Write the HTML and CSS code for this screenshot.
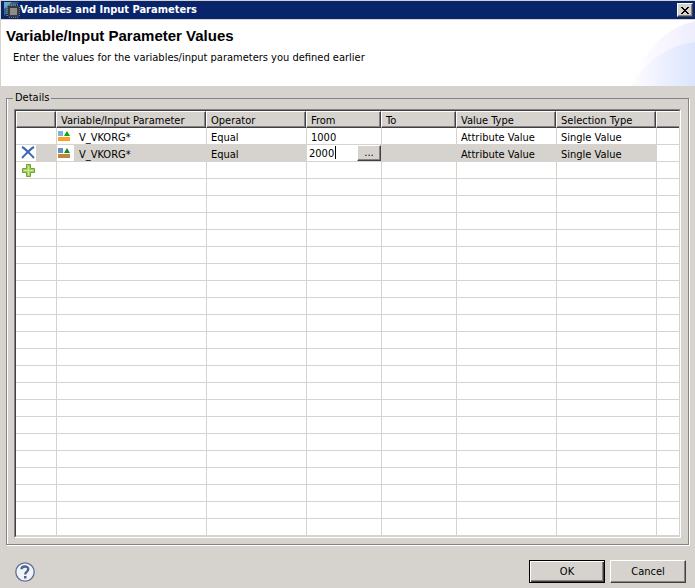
FILE: index.html
```html
<!DOCTYPE html>
<html lang="en">
<head>
    <meta charset="UTF-8">
    <meta name="viewport" content="width=device-width, initial-scale=1.0">
    <title>Variables and Input Parameters</title>
    <link rel="stylesheet" href="styles.css">
</head>
<body>
    <div class="titlebar">
        <svg class="app-icon" width="16" height="16" viewBox="0 0 16 16">
            <path d="M0 0H15L0 14Z" fill="#2a6594"/>
            <path d="M0 0H8L0 7Z" fill="#6ba6cc"/>
            <path d="M5.500 2V16M7.500 2V16M9.500 2V16M11.500 2V16M13.500 2V16M2 5.500H16M2 7.500H16M2 9.500H16M2 11.500H16M2 13.500H16" stroke="#77777c"/>
            <rect x="4" y="4" width="11" height="11" fill="#3a3a3a"/>
            <rect x="6" y="6" width="7" height="7" fill="#8c8c8c"/>
        </svg>
        <span class="titlebar-text">Variables and Input Parameters</span>
        <button class="close" type="button" aria-label="Close">
            <svg width="8" height="7" viewBox="0 0 8 7" shape-rendering="crispEdges">
                <path d="M0 0h2v1h1v1h2v-1h1v-1h2v1h-1v1h-1v1h-1v1h1v1h1v1h1v1h-2v-1h-1v-1h-2v1h-1v1h-2v-1h1v-1h1v-1h1v-1h-1v-1h-1v-1h-1z" fill="#000"/>
            </svg>
        </button>
    </div>

    <header class="banner">
        <div class="banner-text">
            <h1>Variable/Input Parameter Values</h1>
            <p>Enter the values for the variables/input parameters you defined earlier</p>
        </div>
        <svg class="banner-art" width="64" height="66" viewBox="0 0 64 66">
            <defs>
                <linearGradient id="outer" x1="0" x2="1">
                    <stop offset="0" stop-color="#fff"/>
                    <stop offset=".3" stop-color="#fdfaff"/>
                    <stop offset="1" stop-color="#edeefd"/>
                </linearGradient>
                <linearGradient id="inner" x1="0" x2="1">
                    <stop offset="0" stop-color="#fefcff"/>
                    <stop offset="1" stop-color="#dce5fd"/>
                </linearGradient>
            </defs>
            <path d="M0 66C10 36 30 9 64 1V66Z" fill="url(#outer)"/>
            <path d="M0 66C14 42 36 25 64 22V66Z" fill="url(#inner)"/>
        </svg>
    </header>

    <main class="content">
        <fieldset class="details">
            <legend>Details</legend>
            <div class="grid">
                <table>
                    <colgroup>
                        <col class="col-action">
                        <col class="col-name">
                        <col class="col-wide">
                        <col class="col-value">
                        <col class="col-value">
                        <col class="col-wide">
                        <col class="col-wide">
                        <col>
                    </colgroup>
                    <thead>
                        <tr>
                            <th></th>
                            <th>Variable/Input Parameter</th>
                            <th>Operator</th>
                            <th>From</th>
                            <th>To</th>
                            <th>Value Type</th>
                            <th>Selection Type</th>
                            <th></th>
                        </tr>
                    </thead>
                    <tbody id="rows">
                        <tr>
                            <td></td>
                            <td>
                                <div class="variable">
                                    <span class="icon-box">
                                        <svg width="13" height="11" viewBox="0 0 13 11">
                                            <path d="M0 0H5V5H0Z" fill="#7fb2e0"/>
                                            <path d="M9 0L12 5H6Z" fill="#0aa80a"/>
                                            <path d="M0 6H12V10H0Z" fill="#f9a22b"/>
                                        </svg>
                                    </span>
                                    V_VKORG*
                                </div>
                            </td>
                            <td>Equal</td>
                            <td>1000</td>
                            <td></td>
                            <td>Attribute Value</td>
                            <td>Single Value</td>
                            <td></td>
                        </tr>
                        <tr class="selected">
                            <td class="action">
                                <span class="action-box">
                                    <svg width="14" height="13" viewBox="0 0 14 13">
                                        <path d="M1 1C5 3 9 8 13 12M13 1C9 3 5 8 1 12" fill="none" stroke="#3c68b4" stroke-width="2"/>
                                    </svg>
                                </span>
                            </td>
                            <td>
                                <div class="variable">
                                    <span class="icon-box">
                                        <svg width="13" height="11" viewBox="0 0 13 11">
                                            <path d="M0 0H5V5H0Z" fill="#6390c4"/>
                                            <path d="M9 0L12 5H6Z" fill="#0c8a24"/>
                                            <path d="M0 6H12V10H0Z" fill="#c0843c"/>
                                        </svg>
                                    </span>
                                    V_VKORG*
                                </div>
                            </td>
                            <td>Equal</td>
                            <td class="editing">
                                <div class="editor">
                                    <input type="text" value="2000" aria-label="From">
                                    <span class="caret"></span>
                                    <button class="browse" type="button">...</button>
                                </div>
                            </td>
                            <td></td>
                            <td>Attribute Value</td>
                            <td>Single Value</td>
                            <td></td>
                        </tr>
                        <tr>
                            <td class="action">
                                <svg width="13" height="13" viewBox="0 0 13 13">
                                    <path d="M4.500 .5h4v4h4v4h-4v4h-4v-4h-4v-4h4z" fill="#a9cf55" stroke="#6ba050"/>
                                    <path d="M6.500 2v9M2 6.500h9" stroke="#d6e887"/>
                                </svg>
                            </td>
                            <td></td>
                            <td></td>
                            <td></td>
                            <td></td>
                            <td></td>
                            <td></td>
                            <td></td>
                        </tr>
                    </tbody>
                </table>
            </div>
        </fieldset>
    </main>

    <footer>
        <button class="help" type="button" aria-label="Help">
            <svg width="20" height="20" viewBox="0 0 20 20">
                <circle cx="10" cy="10" r="9.200" fill="#f2f3f8" stroke="#5b7197" stroke-width="1.300"/>
                <path d="M6.500 7.300C6.500 3.500 13.300 3.600 13.300 7.200C13.300 9.500 10.200 9.600 10.200 12.500" fill="none" stroke="#4a648f" stroke-width="2.300"/>
                <rect x="9" y="14" width="2.500" height="2.500" fill="#4a648f"/>
            </svg>
        </button>
        <button class="button default" type="button">OK</button>
        <button class="button" type="button">Cancel</button>
    </footer>

    <script>
        // Fill the rest of the grid with empty rows
        var rows = document.getElementById("rows");
        var emptyRows = 21;

        for (var i = 0; i < emptyRows; i++) {
            var row = rows.insertRow();
            for (var j = 0; j < 8; j++) {
                row.insertCell();
            }
        }
    </script>
</body>
</html>
```

FILE: styles.css
```css
* {
    box-sizing: border-box;
}

body {
    margin: 0;
    min-height: 100vh;
    display: flex;
    flex-direction: column;
    border-left: 1px solid #d6d3ce;
    border-top: 1px solid #d6d3ce;
    background-color: #d6d3ce;
    color: black;
    font-family: "DejaVu Sans Condensed", "DejaVu Sans", Tahoma, sans-serif;
    font-stretch: condensed;
    font-size: 11px;
    line-height: 14px;
}

button,
input {
    font: inherit;
    color: inherit;
    border-radius: 0;
    margin: 0;
    padding: 0;
}

svg {
    display: block;
}

/* Title bar */
.titlebar {
    display: flex;
    align-items: center;
    height: 18px;
    padding: 0 2px 0 3px;
    background-color: #08246b;
    color: white;
}

.titlebar-text {
    flex: 1;
    font-weight: bold;
}

.close {
    display: flex;
    align-items: center;
    justify-content: center;
    width: 16px;
    height: 14px;
    background-color: #d6d3ce;
    border: 1px solid;
    border-color: white #404040 #404040 white;
    box-shadow: inset -1px -1px #848284;
}

/* Banner */
.banner {
    display: flex;
    justify-content: space-between;
    height: 67px;
    background-color: white;
    border-top: 1px solid #d6d3ce;
}

.banner-text {
    padding: 8px 0 0 5px;
}

h1 {
    margin: 0;
    font-family: "Liberation Sans", Arial, sans-serif;
    font-size: 15px;
    line-height: 16px;
}

.banner p {
    margin: 7px 0 0 7px;
}

/* Details group */
.content {
    padding: 5px 6px 0 5px;
}

.details {
    margin: 0;
    padding: 4px 7px 6px;
    border: 1px solid #848284;
    box-shadow: 1px 1px white, inset 1px 0 white;
}

legend {
    margin-left: -1px;
    padding: 0 2px;
    background-color: #d6d3ce;
}

.grid {
    border: 1px solid;
    border-color: #848284 white white #848284;
    background-color: white;
}

table {
    width: 100%;
    table-layout: fixed;
    border-spacing: 0;
    border: 1px solid;
    border-color: #404040 #d6d3ce #d6d3ce #404040;
}

.col-action {
    width: 40px;
}

.col-name {
    width: 150px;
}

.col-wide {
    width: 100px;
}

.col-value {
    width: 75px;
}

th {
    height: 17px;
    padding: 2px 0 0 4px;
    background-color: #d6d3ce;
    border: 1px solid;
    border-color: white #404040 #404040 white;
    box-shadow: inset -1px -1px #848284;
    font-weight: normal;
    line-height: 13px;
    text-align: left;
    white-space: nowrap;
}

th:last-child {
    border-right: none;
    box-shadow: inset 0 -1px #848284;
}

td {
    height: 17px;
    padding: 3px 0 0 4px;
    border-left: 1px solid #d6d3ce;
    border-bottom: 1px solid #d6d3ce;
    line-height: 13px;
    white-space: nowrap;
}

td:first-child {
    border-left: none;
}

.selected td {
    background-color: #d6d3ce;
}

.selected td:last-child {
    background-color: white;
}

td.action {
    padding: 0 0 0 6px;
}

.selected td.action {
    padding: 0;
}

.action-box {
    display: block;
    width: 20px;
    padding: 1px 0 2px 5px;
    background-color: white;
}

.variable {
    display: flex;
    height: 13px;
    margin: 0 0 0 -4px;
    gap: 5px;
}

.icon-box {
    width: 17px;
    height: 16px;
    margin-top: -3px;
    padding: 3px 0 0 1px;
    background-color: white;
}

/* Cell editor */
td.editing {
    padding: 0;
}

.editor {
    position: relative;
    display: flex;
    height: 16px;
    background-color: white;
}

.editor input {
    flex: 1;
    min-width: 0;
    padding: 0 0 0 2px;
    border: none;
    outline: none;
    background-color: white;
}

.caret {
    position: absolute;
    left: 28px;
    top: 1px;
    width: 1px;
    height: 13px;
    background-color: black;
}

.browse,
.button {
    background-color: #d6d3ce;
    border: 1px solid;
    border-color: white #404040 #404040 white;
    box-shadow: inset -1px -1px #848284;
}

.browse {
    width: 24px;
    line-height: 14px;
}

/* Buttons */
footer {
    display: flex;
    align-items: center;
    gap: 5px;
    padding: 15px 9px 4px 14px;
}

.help {
    margin-right: auto;
    border: none;
    background: none;
}

.button {
    width: 76px;
    height: 23px;
}

.button.default {
    border-color: black;
    box-shadow: inset 1px 1px white, inset -1px -1px #404040, inset -2px -2px #848284;
}
```
